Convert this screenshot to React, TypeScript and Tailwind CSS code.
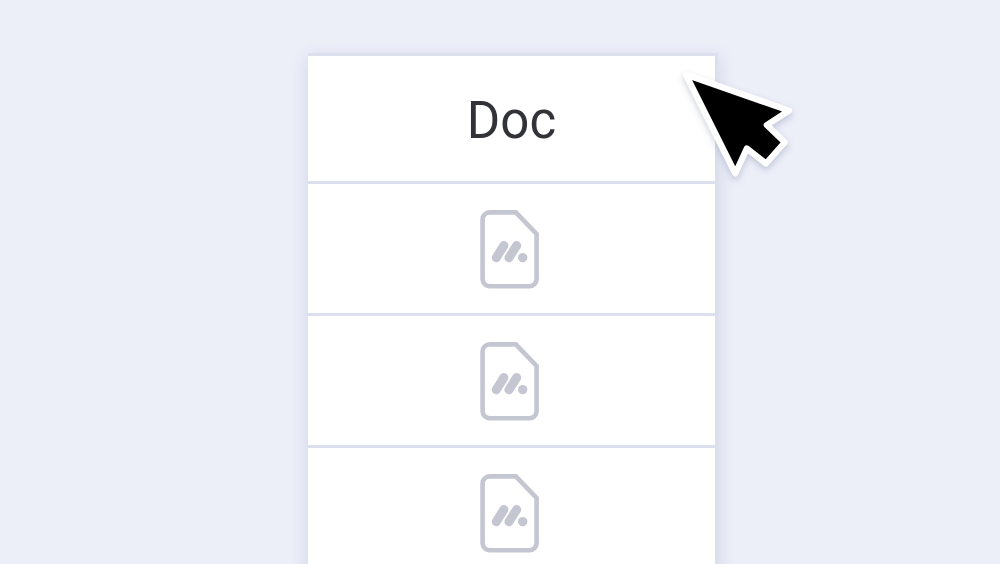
const rows = ['doc-1', 'doc-2', 'doc-3'];

const DocIcon = () => {
	return (
		<svg
			width="63"
			height="80"
			viewBox="0 0 63 80"
			fill="none"
			stroke="#c4c7d2"
			role="img"
			aria-label="Open doc"
			className="block mx-auto"
		>
			<path
				strokeWidth="4.6"
				d="M9.6 2.4H35.8L56.6 23.9V69.2a7 7 0 0 1-7 7H9.6a7 7 0 0 1-7-7V9.4a7 7 0 0 1 7-7Z"
			/>
			<path
				strokeWidth="9"
				strokeLinecap="round"
				d="M16.2 47.8L23.9 35.5M28.9 47.8L36.7 35.5"
			/>
			<circle cx="42.7" cy="47.6" r="4.7" fill="#c4c7d2" stroke="none" />
		</svg>
	);
};

const Cursor = () => {
	return (
		<svg
			width="120"
			height="120"
			viewBox="0 0 120 120"
			aria-hidden="true"
			className="absolute top-3 left-[92%] overflow-visible drop-shadow-[0_3px_3px_rgba(60,80,120,0.25)]"
		>
			<path
				fill="#000"
				stroke="#fff"
				strokeWidth="6.2"
				strokeLinejoin="round"
				d="M0.8 9.5L104 45.6L81.8 60L99.8 77.2L81 98.5L61.8 83.5L50.3 108.5Z"
			/>
		</svg>
	);
};

const App = () => {
	return (
		<main className="h-screen overflow-hidden bg-[#eceef8] pt-[53px] pl-[26px] flex justify-center items-start">
			<div className="relative w-[42%]">
				<table className="w-full border-separate border-spacing-0 bg-white border-t-[3px] border-r-[3px] border-[#dce0ed] shadow-[0_5px_16px_rgba(80,105,150,0.18)]">
					<thead>
						<tr>
							<th
								scope="col"
								className="h-32 p-0 pt-1 border-b-[3px] border-[#dce0ed] font-['Roboto',sans-serif] text-[51px] leading-none font-normal text-[#323338]"
							>
								Doc
							</th>
						</tr>
					</thead>
					<tbody>
						{rows.map((row) => (
							<tr key={row}>
								<td className="h-33 p-0 pt-0.5 border-b-[3px] border-[#dce0ed]">
									<DocIcon />
								</td>
							</tr>
						))}
					</tbody>
				</table>
				<Cursor />
			</div>
		</main>
	);
};

export default App;
